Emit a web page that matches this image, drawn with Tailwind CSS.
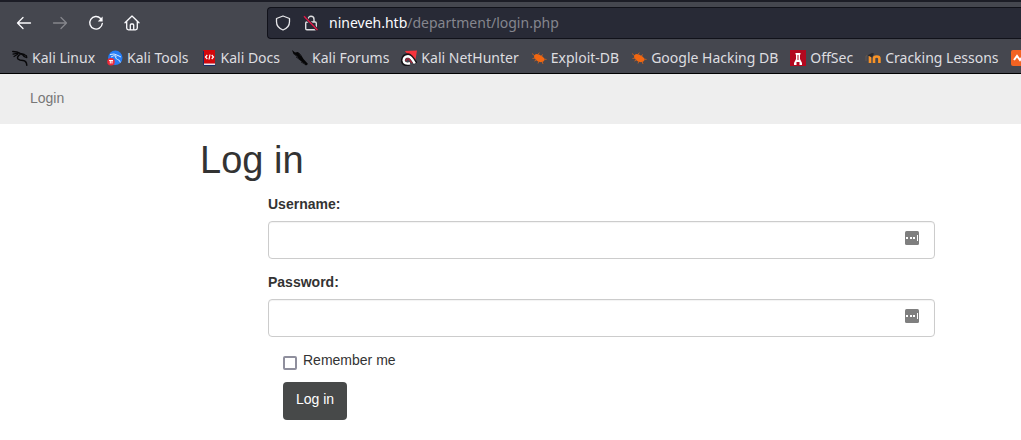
<!DOCTYPE html>
<html lang="en">
<head>
<meta charset="utf-8">
<meta name="viewport" content="width=device-width, initial-scale=1">
<title>Log in</title>
<script src="https://cdn.jsdelivr.net/npm/@tailwindcss/browser@4"></script>
</head>
<body class="min-h-screen overflow-x-hidden bg-white font-['Liberation_Sans',Arial,sans-serif] text-sm text-[#333333]">
<svg class="hidden" aria-hidden="true">
  <symbol id="bug" viewBox="0 0 16 16"><path fill="#f26711" d="M3 5.5L5 4l3 .6 3 1.6 2 1.8.6 2-1.2 1.6-2.4.7-3-.7L4.500 9.500 3.200 7.500z"/><path stroke="#d9631a" stroke-width=".8" d="M1 3.500L4 6M1.500 8.500L5 8M6 5L8.500 2.800M10 6l2-1.500M3.500 11L6 9.500M7 13.500L8 11M11 11l1 3M13 9l2.500.5" fill="none"/></symbol>
  <symbol id="autofill" viewBox="0 0 14 14"><rect width="14" height="14" rx="1.5" fill="#7f7f7f"/><path fill="#fff" d="M1 6h2v2H1zM5 6h2v2H5zM8 6h2v2H8zM12 4h1v6h-1z"/></symbol>
</svg>

<header class="border-t-2 border-b border-t-[#1c1d26] border-b-black bg-[#45474f] font-['Noto_Sans',sans-serif] text-[#dedee0]">
  <div class="flex h-[41px] items-center">
    <nav class="flex w-[267px] shrink-0 items-center gap-5 pl-4" aria-label="Browser">
      <button type="button" aria-label="Back"><svg class="size-4" viewBox="0 0 16 16" fill="none" stroke="#fbfbfe" stroke-width="1.3" stroke-linecap="round" stroke-linejoin="round"><path d="M14.500 8h-13M7 2.500L1.500 8 7 13.500"/></svg></button>
      <button type="button" aria-label="Forward" disabled><svg class="size-4" viewBox="0 0 16 16" fill="none" stroke="#85868c" stroke-width="1.3" stroke-linecap="round" stroke-linejoin="round"><path d="M1.500 8h13M9 2.500L14.500 8 9 13.500"/></svg></button>
      <button type="button" aria-label="Reload"><svg class="size-4" viewBox="0 0 16 16" fill="none" stroke="#fbfbfe" stroke-width="1.4" stroke-linecap="round"><path d="M12.600 3.400A6.300 6.300 0 1 0 14.300 8.500"/><path d="M14.600 1.600v4.800H9.800z" fill="#fbfbfe" stroke="none"/></svg></button>
      <button type="button" aria-label="Home"><svg class="size-4" viewBox="0 0 16 16" fill="none" stroke="#fbfbfe" stroke-width="1.3" stroke-linecap="round" stroke-linejoin="round"><path d="M1 7.700L8 1l7 6.700M2.700 6.500V13q0 1.800 1.800 1.800h7q1.800 0 1.800-1.800V6.500M6.300 14.500V10q0-1 1-1h1.400q1 0 1 1v4.500"/></svg></button>
    </nav>
    <div class="flex h-8 grow items-center rounded-l border border-r-0 border-[#11121a] bg-[#282a36] pl-[7px]">
      <svg class="mr-3 size-4 shrink-0" viewBox="0 0 16 16" fill="none" stroke="#e8e8eb" stroke-width="1.3" stroke-linejoin="round"><path d="M8 1l6.500 2.500v3.300c0 3.600-2.200 6.600-6.500 8.200-4.300-1.600-6.500-4.600-6.500-8.200V3.500z"/></svg>
      <svg class="mr-[10px] size-4 shrink-0" viewBox="0 0 16 16" fill="none" stroke="#dedee0" stroke-width="1.4"><rect x="2.7" y="7" width="10.6" height="7.8" rx="1.2"/><path d="M5 7V4.300a3 3 0 0 1 6 0V7"/><path d="M1 1.200L14.500 15" stroke="#282a36" stroke-width="3"/><path d="M1 1.200L14.500 15" stroke="#e21846" stroke-width="1.4"/></svg>
      <div class="grow text-sm whitespace-nowrap text-[#85868e]" role="textbox" aria-label="Address"><span class="text-[#fbfbfe]">nineveh.htb</span>/department/login.php</div>
    </div>
  </div>
  <nav class="flex h-[30px] items-center gap-3 overflow-hidden pl-3 text-sm whitespace-nowrap" aria-label="Bookmarks">
    <a href="#" class="flex shrink-0 items-center gap-1"><svg class="size-4" viewBox="0 0 16 16" fill="none" stroke="#08080a" stroke-linecap="round" stroke-linejoin="round"><path stroke-width="1.5" d="M.8 1.500l4 .4 3.500 1.600 3.700 1M8 4.500Q4.500 7 6 9q1.500 1.500 5 1.600 3.500.4 3.800 4.600"/><path stroke-width="1.200" d="M1 4.200l5-1M2 6.500l4-2.500M12 4.500l2.500 1.300.3 1.800-3-1.200M9.500 4l3 2.500"/></svg>Kali Linux</a>
    <a href="#" class="flex shrink-0 items-center gap-1"><svg class="size-4" viewBox="0 0 16 16" fill="none"><circle cx="8.300" cy="7.800" r="7.200" fill="#267df5"/><path d="M3 4.500q4-1.500 8 1l3 1.500M4 7q3-2 5-1Q7.500 8.500 10.500 9.500q2.500.5 2.800 3" stroke="#d8eaff"/><circle cx="4" cy="11.800" r="3.800" fill="#ed2939"/><path d="M2 10.500h4M3.300 10.500v3M5 10.500v3" stroke="#fff"/></svg>Kali Tools</a>
    <a href="#" class="flex shrink-0 items-center gap-1"><svg class="size-4" viewBox="0 0 16 16"><path d="M3 0h11v15H3q-1-1-1-2V1q0-1 1-1z" fill="#d3080c"/><path d="M3 13.500h11V15H3z" fill="#e4e4ef"/><path d="M2 1v12q0 2 1 3h11.500v-1H3V1z" fill="#182d66"/><path d="M6.300 5L4.500 7l1.800 2M10.700 5l1.800 2-1.800 2M9 4.500L8 9.500" fill="none" stroke="#fff" stroke-width="1.2"/></svg>Kali Docs</a>
    <a href="#" class="flex shrink-0 items-center gap-1"><svg class="size-4" viewBox="0 0 16 16"><path fill="#050506" d="M0 0l3 2.500 3-.5 3 3 2.500 4 4.500 5-2 1.500-4.500-4-2.500-2L4.500 6 1.500 4z"/><path d="M2 4l4 3M7 3l2 3M4 7l3 2M9 12l4 2" fill="none" stroke="#17171b"/></svg>Kali Forums</a>
    <a href="#" class="flex shrink-0 items-center gap-1"><svg class="size-4" viewBox="0 0 16 16" fill="none"><path d="M4 1l12-.5-2 12-5-5z" fill="#f5343c"/><path d="M8.500 14Q2 15 1.800 10.500 2.500 5.500 7 5.300q3 0 7.500 8.200" stroke="#141418" stroke-width="4"/><path d="M9 13.300Q3 14.500 2.600 10.500 3 6.500 7 6.300q3 .2 6.800 7.200" stroke="#fff" stroke-width="2.400"/><path d="M5 11q.5-3 3-2l3 4" stroke="#b61d33" stroke-width="1.200"/></svg>Kali NetHunter</a>
    <a href="#" class="flex shrink-0 items-center gap-1"><svg class="size-4"><use href="#bug"/></svg>Exploit-DB</a>
    <a href="#" class="flex shrink-0 items-center gap-1"><svg class="size-4"><use href="#bug"/></svg>Google Hacking DB</a>
    <a href="#" class="flex shrink-0 items-center gap-1"><svg class="size-4" viewBox="0 0 16 16"><path fill="#b3081f" d="M0 0h16v16H0z"/><path fill="#fff" d="M5.500 3h5v1.500H10V9l2 4v2H9.500v-3h-3v3H4v-2l2-4V4.500h-.5z"/><path fill="#b3081f" d="M7.500 5h1v5h-1z"/></svg>OffSec</a>
    <a href="#" class="flex shrink-0 items-center gap-1"><svg class="size-4" viewBox="0 0 16 16" fill="none"><path d="M5 13V6M9 13V8.500q0-2 2.700-2t2.700 2V13" stroke="#f79226" stroke-width="2.600"/><path fill="#292a2e" d="M2 5.500L7 3l2 .5L7 7.500 4 6z"/><path d="M2.500 5.500L1 6v5" stroke="#66584e"/></svg>Cracking Lessons</a>
    <a href="#" class="shrink-0" aria-label="More"><svg class="size-4" viewBox="0 0 16 16"><rect width="16" height="16" rx="2" fill="#f26322"/><path d="M3 10l3-4 3 4 3-4" fill="none" stroke="#fff" stroke-width="2"/></svg></a>
  </nav>
</header>

<nav class="flex h-[50px] items-center bg-[#eeeeee] px-[30px] pb-[2px]" aria-label="Site">
  <a href="#" class="text-[#777777]">Login</a>
</nav>

<main class="mr-[86px] ml-[200px] pt-[14px]">
  <h1 class="text-[38px] leading-[44px]">Log in</h1>
  <form class="pt-3 pl-[68px]">
    <label for="username" class="mb-[7px] block font-bold">Username:</label>
    <div class="relative mb-[13px]">
      <input id="username" name="username" type="text" class="block h-[38px] w-full rounded border border-[#cccccc] py-2 pr-11 pl-3 inset-shadow-xs">
      <svg class="absolute top-[10px] right-4 size-[14px]"><use href="#autofill"/></svg>
    </div>
    <label for="password" class="mb-[7px] block font-bold">Password:</label>
    <div class="relative mb-[13px]">
      <input id="password" name="password" type="password" class="block h-[38px] w-full rounded border border-[#cccccc] py-2 pr-11 pl-3 inset-shadow-xs">
      <svg class="absolute top-[10px] right-4 size-[14px]"><use href="#autofill"/></svg>
    </div>
    <div class="flex flex-col items-start gap-3 pl-[15px]">
      <div class="flex items-start gap-[6px]">
        <input id="remember" name="remember" type="checkbox" class="mt-[6px] size-[14px] appearance-none rounded-xs border-2 border-[#8f8f9d] bg-white checked:bg-[#4a4c4b]">
        <label for="remember">Remember me</label>
      </div>
      <button type="submit" class="h-[38px] rounded bg-[#474949] px-[13px] pb-1 text-white">Log in</button>
    </div>
  </form>
</main>
</body>
</html>
